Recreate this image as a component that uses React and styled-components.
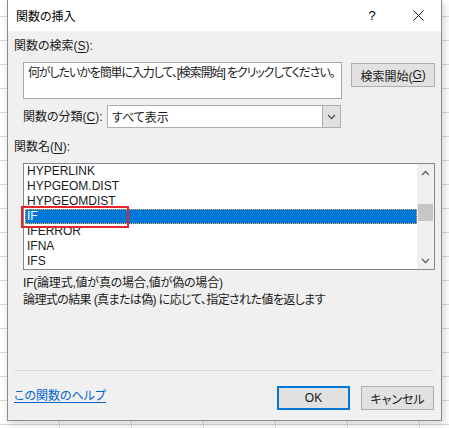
import React, { useState } from "react";
import styled, { createGlobalStyle } from "styled-components";

const FONT = `"Liberation Sans", "Noto Sans CJK JP", sans-serif`;

const GlobalStyle = createGlobalStyle`
  html, body {
    margin: 0;
    padding: 0;
  }
  body {
    width: 449px;
    height: 428px;
    overflow: hidden;
    font-family: ${FONT};
    font-feature-settings: "palt";
    background-color: #ffffff;
    background-image:
      repeating-linear-gradient(to right, transparent 0, transparent 59px, #dadada 59px, #dadada 60px, transparent 60px, transparent 72px),
      repeating-linear-gradient(to bottom, transparent 0, transparent 16px, #dadada 16px, #dadada 17px, transparent 17px, transparent 24px);
  }
`;

const FUNCTIONS = ["HYPERLINK", "HYPGEOM.DIST", "HYPGEOMDIST", "IF", "IFERROR", "IFNA", "IFS"];

function ChevronUp() {
  return (
    <svg width="9" height="6" viewBox="0 0 9 6">
      <path d="M1 5 L4.5 1.5 L8 5" fill="none" stroke="#606060" strokeWidth="1.3" />
    </svg>
  );
}

function ChevronDown({ color = "#606060" }) {
  return (
    <svg width="9" height="6" viewBox="0 0 9 6">
      <path d="M1 1 L4.5 4.5 L8 1" fill="none" stroke={color} strokeWidth="1.3" />
    </svg>
  );
}

function App() {
  const [selected, setSelected] = useState(3);

  return (
    <>
      <GlobalStyle />
      <Dialog>
        <TitleBar>
          <TitleText>関数の挿入</TitleText>
          <TitleButtons>
            <HelpMark>?</HelpMark>
            <CloseButton>
              <svg width="11" height="11" viewBox="0 0 11 11">
                <path d="M0.5 0.5 L10.5 10.5 M10.5 0.5 L0.5 10.5" stroke="#1a1a1a" strokeWidth="1" />
              </svg>
            </CloseButton>
          </TitleButtons>
        </TitleBar>

        <Body>
          <Label>
            関数の検索(<u>S</u>):
          </Label>
          <SearchRow>
            <SearchBox>何がしたいかを簡単に入力して、[検索開始] をクリックしてください。</SearchBox>
            <Button width="84px">
              検索開始(<u>G</u>)
            </Button>
          </SearchRow>

          <CategoryRow>
            <Label>
              関数の分類(<u>C</u>):
            </Label>
            <Select>
              <SelectValue>すべて表示</SelectValue>
              <SelectArrow>
                <ChevronDown color="#505050" />
              </SelectArrow>
            </Select>
          </CategoryRow>

          <Label top="11px">
            関数名(<u>N</u>):
          </Label>
          <ListBox>
            <ListItems>
              {FUNCTIONS.map((name, i) => (
                <ListItem key={name} active={i === selected} onClick={() => setSelected(i)}>
                  {name}
                </ListItem>
              ))}
            </ListItems>
            <ScrollBar>
              <ScrollArrow>
                <ChevronUp />
              </ScrollArrow>
              <ScrollTrack>
                <ScrollThumb />
              </ScrollTrack>
              <ScrollArrow>
                <ChevronDown />
              </ScrollArrow>
            </ScrollBar>
            <Highlight />
          </ListBox>

          <Description>
            <DescLine spacing="-0.2px">IF(論理式,値が真の場合,値が偽の場合)</DescLine>
            <DescLine spacing="-0.6px">論理式の結果 (真または偽) に応じて、指定された値を返します</DescLine>
          </Description>
        </Body>

        <Footer>
          <HelpLink>この関数のヘルプ</HelpLink>
          <FooterButtons>
            <Button width="73px" primary>
              OK
            </Button>
            <Button width="73px">キャンセル</Button>
          </FooterButtons>
        </Footer>
      </Dialog>
    </>
  );
}

const Dialog = styled.div`
  margin-left: 7px;
  width: 433px;
  height: 420px;
  border: 1px solid #8c8c8c;
  border-top: none;
  background: #f0f0f0;
  display: flex;
  flex-direction: column;
  box-shadow: 2px 3px 8px rgba(0, 0, 0, 0.18);
  color: #1a1a1a;
  font-size: 12px;
`;

const TitleBar = styled.div`
  height: 31px;
  background: #ffffff;
  display: flex;
  align-items: center;
  justify-content: space-between;
  padding-left: 8px;
`;

const TitleText = styled.div`
  font-size: 12px;
  color: #000;
`;

const TitleButtons = styled.div`
  display: flex;
  align-items: center;
  height: 100%;
`;

const HelpMark = styled.div`
  width: 46px;
  text-align: center;
  font-size: 13px;
  font-family: "Liberation Sans", sans-serif;
  color: #000;
`;

const CloseButton = styled.div`
  width: 46px;
  height: 100%;
  display: flex;
  align-items: center;
  justify-content: center;
`;

const Body = styled.div`
  padding: 7px 6px 0 6px;
  display: flex;
  flex-direction: column;
`;

const Label = styled.div`
  height: 16px;
  line-height: 16px;
  white-space: nowrap;
  margin-top: ${({ top }) => top || "0"};
  u {
    text-decoration-thickness: 1px;
    text-underline-offset: 2px;
  }
`;

const SearchRow = styled.div`
  margin-top: 8px;
  padding-left: 9px;
  display: flex;
  align-items: flex-start;
  gap: 9px;
`;

const SearchBox = styled.div`
  width: 314px;
  height: 33px;
  background: #ffffff;
  border: 1px solid #a9a9a9;
  padding: 2px 0 0 4px;
  line-height: 16px;
  white-space: nowrap;
  letter-spacing: -1.1px;
  overflow: hidden;
`;

const Button = styled.div`
  width: ${({ width }) => width};
  height: 24px;
  box-sizing: border-box;
  background: #e1e1e1;
  border: ${({ primary }) => (primary ? "2px solid #0078d7" : "1px solid #adadad")};
  display: flex;
  align-items: center;
  justify-content: center;
  cursor: default;
  white-space: nowrap;
  margin-top: 1px;
  u {
    text-underline-offset: 2px;
  }
`;

const CategoryRow = styled.div`
  margin-top: 6px;
  padding-left: 9px;
  display: grid;
  grid-template-columns: 84px 234px;
  align-items: center;
`;

const Select = styled.div`
  height: 23px;
  box-sizing: border-box;
  background: #ffffff;
  border: 1px solid #adadad;
  display: flex;
  align-items: stretch;
`;

const SelectValue = styled.div`
  flex: 1;
  padding-left: 4px;
  display: flex;
  align-items: center;
`;

const SelectArrow = styled.div`
  width: 17px;
  background: #e1e1e1;
  border-left: 1px solid #adadad;
  display: flex;
  align-items: center;
  justify-content: center;
`;

const ListBox = styled.div`
  position: relative;
  margin: 8px 0 0 9px;
  width: 412px;
  height: 107px;
  box-sizing: border-box;
  background: #ffffff;
  border: 1px solid #828790;
  display: flex;
`;

const ListItems = styled.div`
  flex: 1;
  padding-left: 1px;
`;

const ListItem = styled.div`
  height: 15px;
  line-height: 15px;
  padding-left: 2px;
  box-sizing: border-box;
  background: ${({ active }) => (active ? "#0078d7" : "transparent")};
  color: ${({ active }) => (active ? "#ffffff" : "#1a1a1a")};
  outline: ${({ active }) => (active ? "1px dotted #f5b041" : "none")};
  outline-offset: -1px;
`;

const ScrollBar = styled.div`
  width: 17px;
  background: #f0f0f0;
  display: flex;
  flex-direction: column;
`;

const ScrollArrow = styled.div`
  height: 17px;
  display: flex;
  align-items: center;
  justify-content: center;
`;

const ScrollTrack = styled.div`
  flex: 1;
  padding: 23px 1px 0 1px;
`;

const ScrollThumb = styled.div`
  height: 17px;
  background: #c6c6c6;
`;

const Highlight = styled.div`
  position: absolute;
  left: -3px;
  top: 42px;
  width: 104px;
  height: 18px;
  border: 2px solid #e3262b;
  pointer-events: none;
`;

const Description = styled.div`
  margin: 5px 0 0 9px;
  display: flex;
  flex-direction: column;
`;

const DescLine = styled.div`
  height: 17px;
  line-height: 17px;
  white-space: nowrap;
  letter-spacing: ${({ spacing }) => spacing};
`;

const Footer = styled.div`
  margin: auto 7px 0 6px;
  padding: 14px 0 10px 0;
  border-top: 1px solid #dadada;
  display: flex;
  align-items: center;
  justify-content: space-between;
`;

const HelpLink = styled.a`
  color: #0066cc;
  text-decoration: underline;
  text-underline-offset: 2px;
  align-self: flex-start;
  margin-top: 1px;
  cursor: pointer;
`;

const FooterButtons = styled.div`
  display: flex;
  gap: 11px;
`;

export default App;
